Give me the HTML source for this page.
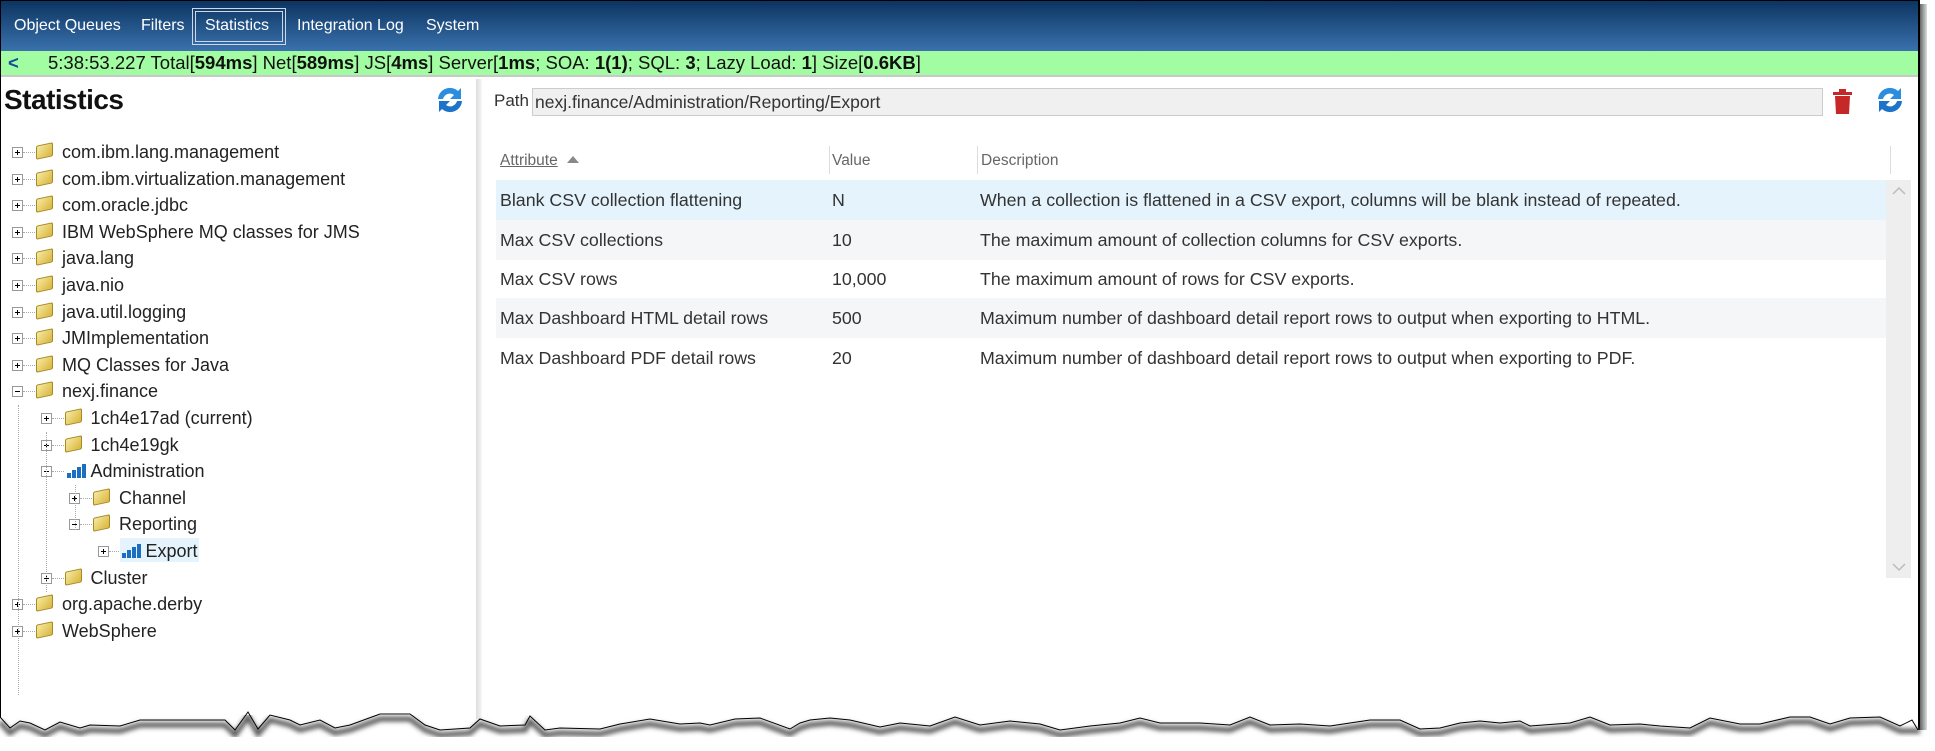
<!DOCTYPE html>
<html><head><meta charset="utf-8"><style>
*{margin:0;padding:0;box-sizing:border-box}
body{width:1935px;height:751px;background:#fff;position:relative;overflow:hidden;font-family:"Liberation Sans",sans-serif}
.a{position:absolute}
#top{left:0;top:0;width:1920px;height:51px;background:linear-gradient(#0c3461,#3a72ad);border-top:1px solid #000;border-left:1px solid #000}
#top span{position:absolute;top:16px;color:#fff;font-size:16px}
#green{left:0;top:51px;width:1920px;height:26px;background:#a2fda2;border-bottom:2px solid #c8c8c8;font-size:18.5px;color:#111;line-height:24px;white-space:nowrap}
.tr{position:absolute;height:26px;font-size:18px;color:#222;line-height:26px;white-space:nowrap}
.box{position:absolute;width:11px;height:11px;border:1px solid #999;background:#fff;top:8px}
.box:before{content:"";position:absolute;left:2px;top:4px;width:5px;height:1px;background:#000}
.box.p:after{content:"";position:absolute;left:4px;top:2px;width:1px;height:5px;background:#000}
.fold{position:absolute;top:5px;width:17px;height:14px;background:linear-gradient(135deg,#f6e9a0,#d9b63c);border:1px solid #a88a22;border-radius:2px;transform:skewY(-12deg)}
.chart{position:absolute;top:6px;width:19px;height:14px}
.chart i{position:absolute;bottom:0;width:4px;background:#1b6ec2}
.dot{position:absolute;border-top:1px dotted #aaa;height:0}
.vd{position:absolute;border-left:1px dotted #aaa;width:0}
.row{position:absolute;left:496px;width:1390px;height:40px;font-size:17.8px;color:#333;line-height:40px;white-space:nowrap}
.row span{position:absolute}
</style></head><body>
<div id="top" class="a">
<span style="left:13px">Object Queues</span>
<span style="left:140px">Filters</span>
<div class="a" style="left:191px;top:7px;width:94px;height:37px;border:1px solid #cdd8e6"></div>
<div class="a" style="left:194px;top:10px;width:88px;height:31px;border:1px solid #cdd8e6"></div>
<span style="left:204px">Statistics</span>
<span style="left:296px">Integration Log</span>
<span style="left:425px">System</span>
</div>
<div id="green" class="a"><span style="position:absolute;left:8px;color:#1a4a9a;font-weight:bold">&lt;</span><span style="position:absolute;left:48px">5:38:53.227 Total[<b>594ms</b>] Net[<b>589ms</b>] JS[<b>4ms</b>] Server[<b>1ms</b>; SOA: <b>1(1)</b>; SQL: <b>3</b>; Lazy Load: <b>1</b>] Size[<b>0.6KB</b>]</span></div>
<div class="a" style="left:0;top:0;width:1px;height:720px;background:#000"></div>
<div class="a" style="left:1918px;top:0;width:2px;height:730px;background:#000"></div>
<div class="a" style="left:1920px;top:4px;width:7px;height:726px;background:linear-gradient(90deg,#666,#ddd)"></div>
<div class="a" style="left:4px;top:84px;font-size:28px;font-weight:bold;color:#111;letter-spacing:-0.5px">Statistics</div>
<svg class="a" style="left:432px;top:82px" width="36" height="36" viewBox="0 0 36 36"><path d="M6 17a12 12 0 0 1 20-8l3-3v11h-11l4-4a7 7 0 0 0-11 4z" fill="#2a8de0"/><path d="M30 19a12 12 0 0 1-20 8l-3 3v-11h11l-4 4a7 7 0 0 0 11-4z" fill="#1c74c8"/></svg>
<div class="a" style="left:476px;top:79px;width:6px;height:640px;background:linear-gradient(90deg,#ddd,#f7f7f7)"></div>
<div id="tree"></div>
<div class="a" style="left:494px;top:91px;font-size:17px;color:#333">Path</div>
<div class="a" style="left:532px;top:88px;width:1291px;height:28px;background:#f0f0f0;border:1px solid #ccc;font-size:17.5px;color:#333;line-height:26px;padding-left:2px">nexj.finance/Administration/Reporting/Export</div>
<svg class="a" style="left:1832px;top:88px" width="21" height="28"><rect x="1" y="4" width="19" height="3" fill="#c62828"/><rect x="7" y="1" width="7" height="4" fill="#c62828"/><path d="M3 8h15l-1 18h-13z" fill="#c62828"/></svg>
<svg class="a" style="left:1872px;top:82px" width="36" height="36" viewBox="0 0 36 36"><path d="M6 17a12 12 0 0 1 20-8l3-3v11h-11l4-4a7 7 0 0 0-11 4z" fill="#2a8de0"/><path d="M30 19a12 12 0 0 1-20 8l-3 3v-11h11l-4 4a7 7 0 0 0 11-4z" fill="#1c74c8"/></svg>
<div class="a" style="left:500px;top:152px;font-size:15.5px;color:#666;text-decoration:underline">Attribute</div>
<div class="a" style="left:567px;top:156px;width:0;height:0;border-left:6px solid transparent;border-right:6px solid transparent;border-bottom:7px solid #888"></div>
<div class="a" style="left:829px;top:146px;width:1px;height:28px;background:#ddd"></div>
<div class="a" style="left:832px;top:152px;font-size:15.5px;color:#666">Value</div>
<div class="a" style="left:977px;top:146px;width:1px;height:28px;background:#ddd"></div>
<div class="a" style="left:981px;top:152px;font-size:15.5px;color:#666">Description</div>
<div class="a" style="left:1890px;top:146px;width:1px;height:28px;background:#ddd"></div>
<div class="row" style="top:180px;background:#e5f3fd"><span style="left:4px">Blank CSV collection flattening</span><span style="left:336px">N</span><span style="left:484px">When a collection is flattened in a CSV export, columns will be blank instead of repeated.</span></div>
<div class="row" style="top:220px;background:#f5f6f7"><span style="left:4px">Max CSV collections</span><span style="left:336px">10</span><span style="left:484px">The maximum amount of collection columns for CSV exports.</span></div>
<div class="row" style="top:259px"><span style="left:4px">Max CSV rows</span><span style="left:336px">10,000</span><span style="left:484px">The maximum amount of rows for CSV exports.</span></div>
<div class="row" style="top:298px;background:#f5f6f7"><span style="left:4px">Max Dashboard HTML detail rows</span><span style="left:336px">500</span><span style="left:484px">Maximum number of dashboard detail report rows to output when exporting to HTML.</span></div>
<div class="row" style="top:338px"><span style="left:4px">Max Dashboard PDF detail rows</span><span style="left:336px">20</span><span style="left:484px">Maximum number of dashboard detail report rows to output when exporting to PDF.</span></div>
<div class="a" style="left:1886px;top:180px;width:25px;height:398px;background:#eee"></div>
<svg class="a" style="left:1892px;top:186px" width="14" height="10"><path d="M1 8L7 2L13 8" fill="none" stroke="#bbb" stroke-width="1.5"/></svg>
<svg class="a" style="left:1892px;top:562px" width="14" height="10"><path d="M1 2L7 8L13 2" fill="none" stroke="#bbb" stroke-width="1.5"/></svg>
<svg class="a" style="left:0;top:695px" width="1935" height="56">
<defs><filter id="f"><feGaussianBlur stdDeviation="2.5"/></filter></defs>
<path d="M0 22 L10 33 L20 26 L30 28 L45 35 L60 27 L80 33 L90 30 L120 31 L140 25 L200 25 L225 25 L235 35 L248 17 L258 34 L270 20 L290 25 L300 30 L320 25 L335 33 L350 30 L380 19 L410 19 L425 30 L440 35 L470 33 L480 24 L500 31 L525 30 L530 21 L545 35 L560 33 L600 34 L620 29 L650 24 L680 29 L700 28 L710 30 L735 24 L760 23 L790 34 L800 28 L810 25 L830 23 L850 25 L880 32 L900 28 L930 31 L955 22 L980 30 L1010 26 L1040 29 L1060 35 L1090 31 L1120 28 L1140 23 L1160 28 L1200 28 L1230 30 L1250 22 L1270 30 L1300 29 L1330 31 L1370 25 L1400 25 L1420 34 L1440 33 L1460 28 L1480 26 L1500 28 L1520 26 L1530 31 L1570 28 L1590 22 L1610 30 L1640 29 L1660 31 L1690 33 L1710 23 L1740 29 L1760 29 L1790 22 L1810 22 L1830 29 L1850 23 L1880 22 L1900 31 L1912 25 L1918 35 L1935 35 L1935 56 L0 56Z" fill="#fff"/>
<path d="M0 27 L10 38 L20 31 L30 33 L45 40 L60 32 L80 38 L90 35 L120 36 L140 30 L200 30 L225 30 L235 40 L248 22 L258 39 L270 25 L290 30 L300 35 L320 30 L335 38 L350 35 L380 24 L410 24 L425 35 L440 40 L470 38 L480 29 L500 36 L525 35 L530 26 L545 40 L560 38 L600 39 L620 34 L650 29 L680 34 L700 33 L710 35 L735 29 L760 28 L790 39 L800 33 L810 30 L830 28 L850 30 L880 37 L900 33 L930 36 L955 27 L980 35 L1010 31 L1040 34 L1060 40 L1090 36 L1120 33 L1140 28 L1160 33 L1200 33 L1230 35 L1250 27 L1270 35 L1300 34 L1330 36 L1370 30 L1400 30 L1420 39 L1440 38 L1460 33 L1480 31 L1500 33 L1520 31 L1530 36 L1570 33 L1590 27 L1610 35 L1640 34 L1660 36 L1690 38 L1710 28 L1740 34 L1760 34 L1790 27 L1810 27 L1830 34 L1850 28 L1880 27 L1900 36 L1920 36" fill="none" stroke="#555" stroke-width="5" filter="url(#f)"/>
<path d="M0 22 L10 33 L20 26 L30 28 L45 35 L60 27 L80 33 L90 30 L120 31 L140 25 L200 25 L225 25 L235 35 L248 17 L258 34 L270 20 L290 25 L300 30 L320 25 L335 33 L350 30 L380 19 L410 19 L425 30 L440 35 L470 33 L480 24 L500 31 L525 30 L530 21 L545 35 L560 33 L600 34 L620 29 L650 24 L680 29 L700 28 L710 30 L735 24 L760 23 L790 34 L800 28 L810 25 L830 23 L850 25 L880 32 L900 28 L930 31 L955 22 L980 30 L1010 26 L1040 29 L1060 35 L1090 31 L1120 28 L1140 23 L1160 28 L1200 28 L1230 30 L1250 22 L1270 30 L1300 29 L1330 31 L1370 25 L1400 25 L1420 34 L1440 33 L1460 28 L1480 26 L1500 28 L1520 26 L1530 31 L1570 28 L1590 22 L1610 30 L1640 29 L1660 31 L1690 33 L1710 23 L1740 29 L1760 29 L1790 22 L1810 22 L1830 29 L1850 23 L1880 22 L1900 31 L1912 25 L1918 35" fill="none" stroke="#000" stroke-width="1"/>
</svg>
<script>
var items=[[0,'com.ibm.lang.management','p','f'],[0,'com.ibm.virtualization.management','p','f'],[0,'com.oracle.jdbc','p','f'],[0,'IBM WebSphere MQ classes for JMS','p','f'],[0,'java.lang','p','f'],[0,'java.nio','p','f'],[0,'java.util.logging','p','f'],[0,'JMImplementation','p','f'],[0,'MQ Classes for Java','p','f'],[0,'nexj.finance','m','f'],[1,'1ch4e17ad (current)','p','f'],[1,'1ch4e19gk','p','f'],[1,'Administration','m','c'],[2,'Channel','p','f'],[2,'Reporting','m','f'],[3,'Export','p','c'],[1,'Cluster','p','f'],[0,'org.apache.derby','p','f'],[0,'WebSphere','p','f']];
var h='';
items.forEach(function(it,i){var L=it[0],y=139+26.6*i,x=12+28.5*L;
h+='<div class="tr" style="left:'+x+'px;top:'+y+'px;width:300px">';
h+='<div class="box '+(it[2]=='p'?'p':'')+'" style="left:0"></div><div class="dot" style="left:11px;top:13px;width:12px"></div>';
if(it[3]=='f')h+='<div class="fold" style="left:24px"></div>';else if(it[1]!='Export')h+='<div class="chart" style="left:26px"><i style="left:0;height:5px"></i><i style="left:5px;height:8px"></i><i style="left:10px;height:11px"></i><i style="left:15px;height:14px"></i></div>';
var tx=it[1]=='Export'?48:50;
if(it[1]=='Export')h+='<div style="position:absolute;left:22px;top:0;width:79px;height:24px;background:#e5f3fd"></div><div class="chart" style="left:24px"><i style="left:0;height:5px"></i><i style="left:5px;height:8px"></i><i style="left:10px;height:11px"></i><i style="left:15px;height:14px"></i></div>';
h+='<span style="position:absolute;left:'+tx+'px">'+it[1]+'</span></div>';});
h+='<div class="vd" style="left:18px;top:405px;height:290px"></div><div class="vd" style="left:46px;top:432px;height:160px"></div><div class="vd" style="left:75px;top:485px;height:45px"></div>';
document.getElementById('tree').innerHTML=h;
</script>
</body></html>
